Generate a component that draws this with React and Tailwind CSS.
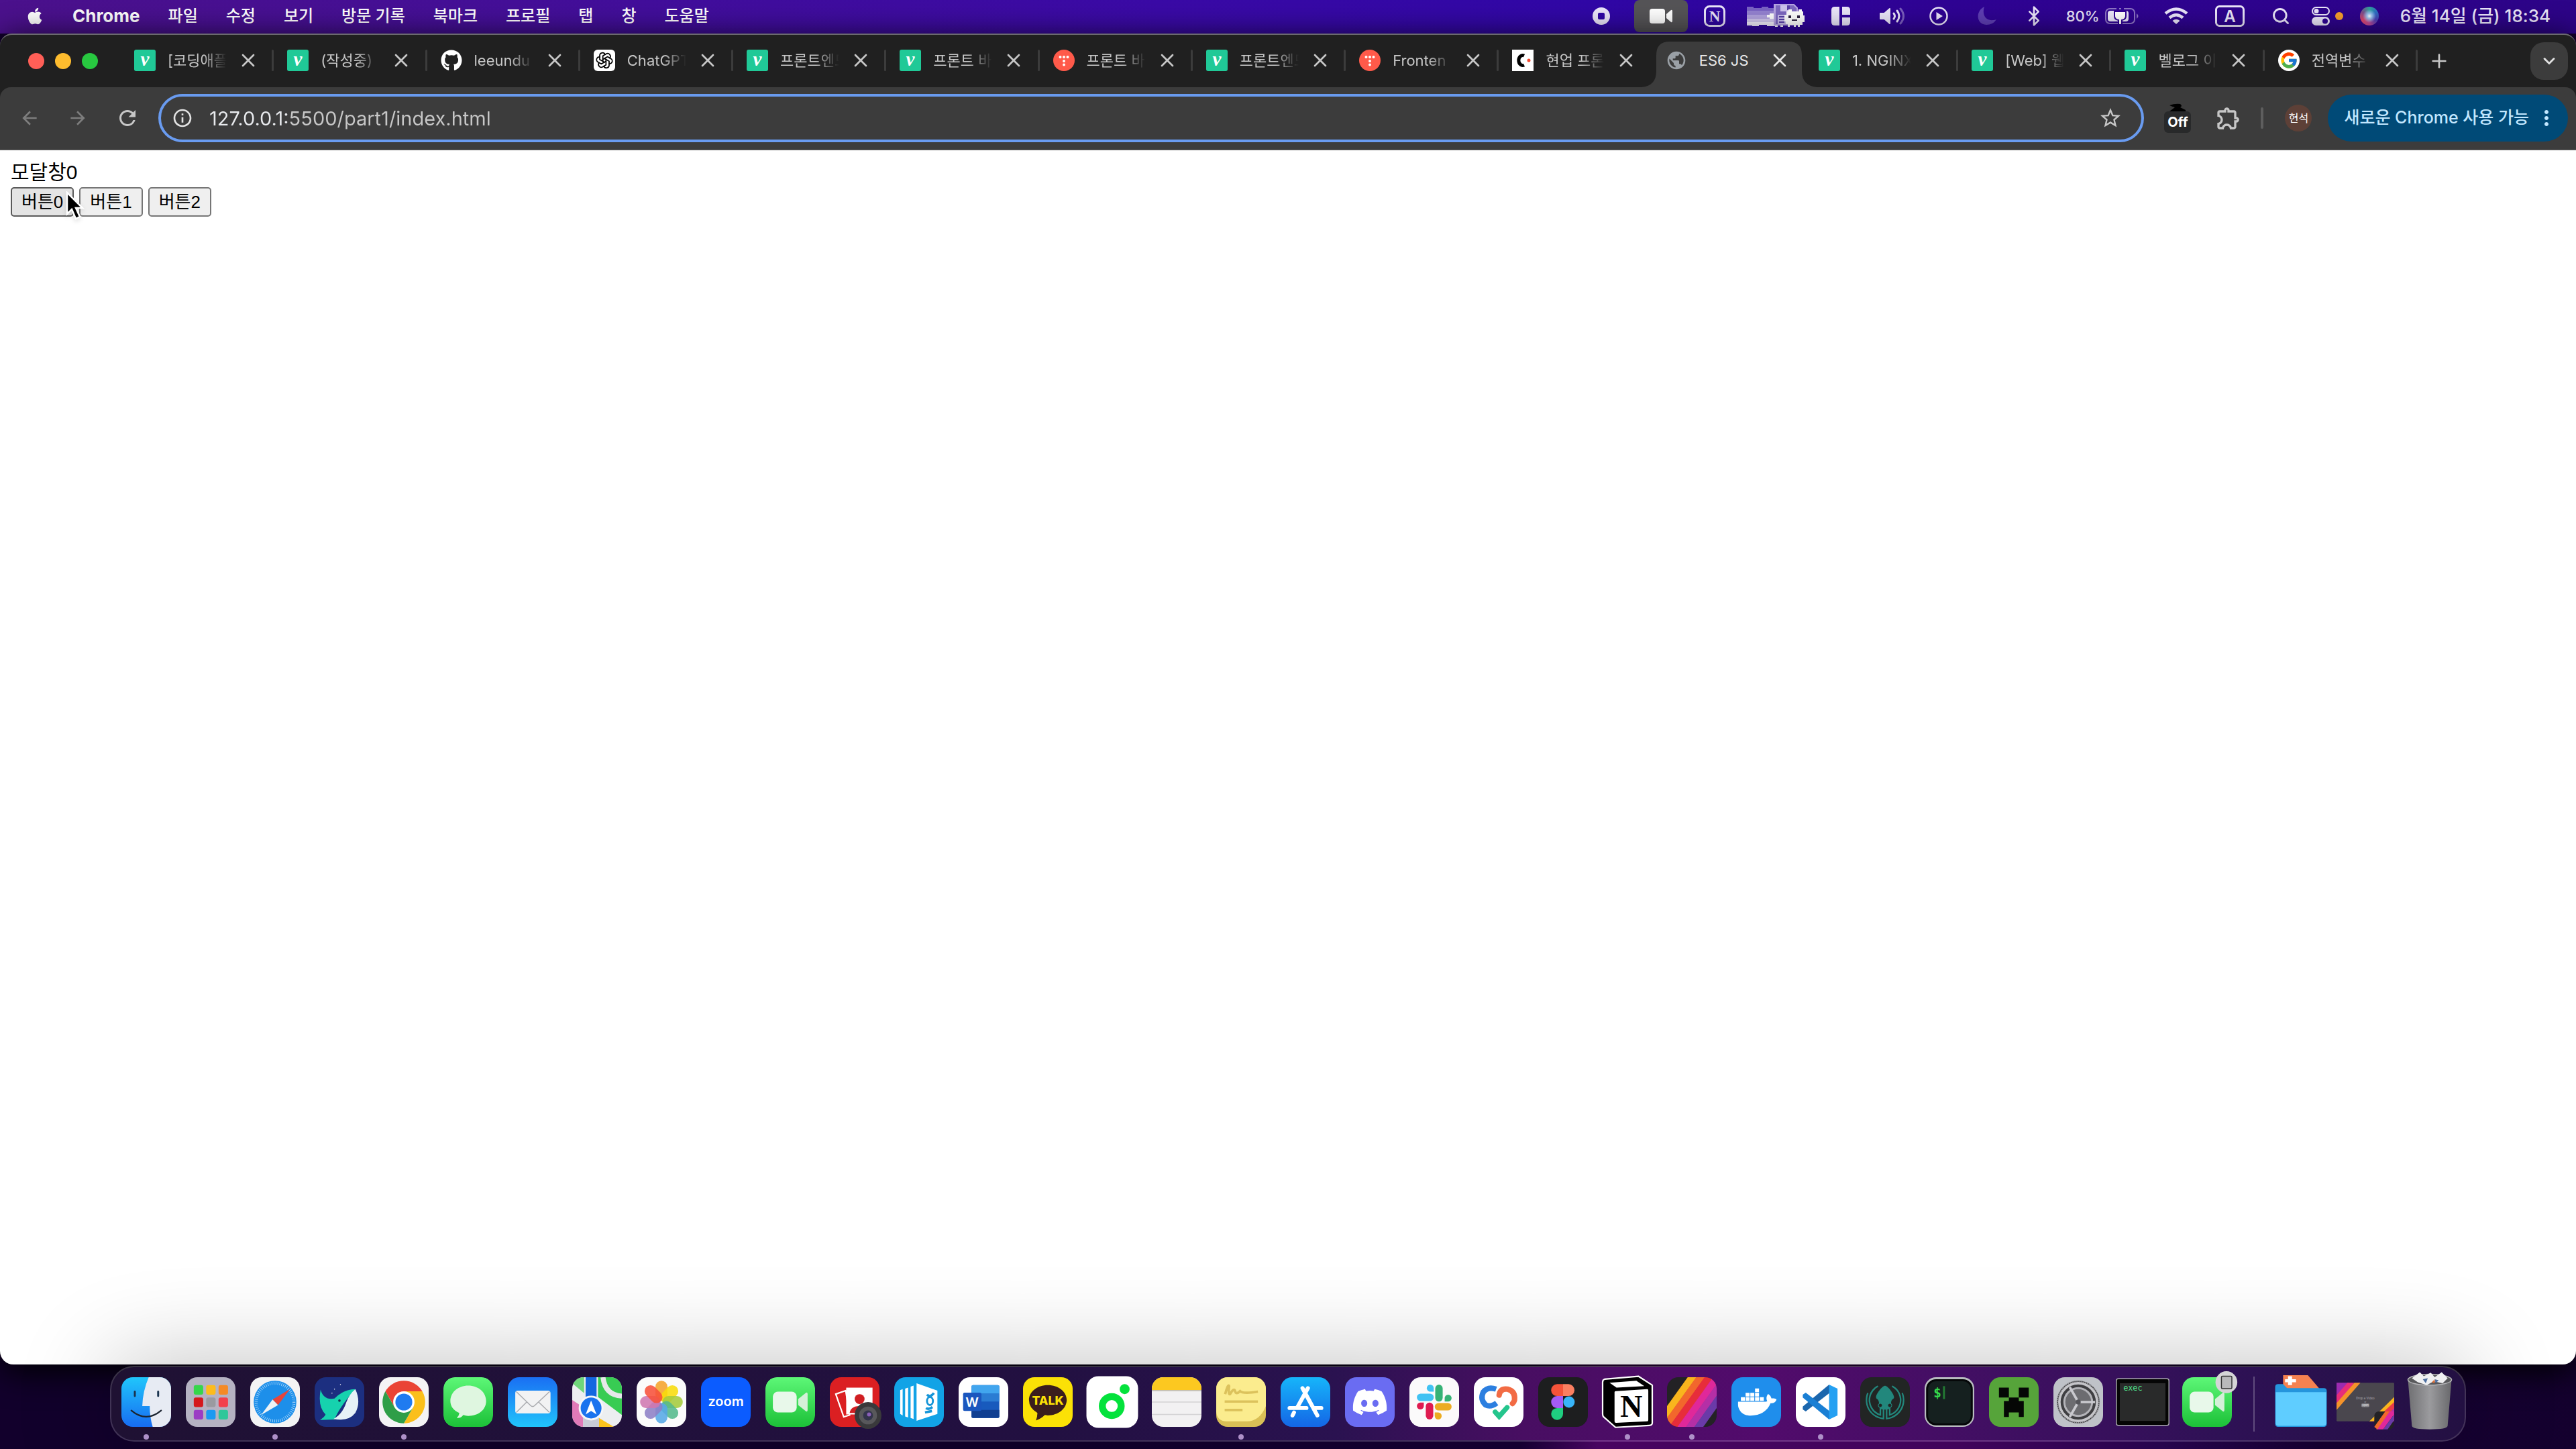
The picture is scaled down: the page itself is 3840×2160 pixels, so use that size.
import React, { useState } from 'react';
import { FaApple, FaGithub, FaDiscord, FaDocker } from 'react-icons/fa';
import { FcGoogle } from 'react-icons/fc';
import { TbBrandOpenai } from 'react-icons/tb';
import { SiGitkraken } from 'react-icons/si';
import { MdArrowBack, MdArrowForward, MdRefresh, MdInfoOutline, MdStarBorder, MdOutlineExtension, MdMoreVert, MdPublic } from 'react-icons/md';
import { Bluetooth, X, Plus, ChevronDown, Search } from 'lucide-react';

const menus = ['파일', '수정', '보기', '방문 기록', '북마크', '프로필', '탭', '창', '도움말'];

const tabs = [
  { title: '[코딩애플]', icon: 'velog' },
  { title: '(작성중)', icon: 'velog' },
  { title: 'leeundu', icon: 'github' },
  { title: 'ChatGPT', icon: 'gpt' },
  { title: '프론트엔드', icon: 'velog' },
  { title: '프론트 바', icon: 'velog' },
  { title: '프론트 바', icon: 'tistory' },
  { title: '프론트엔드', icon: 'velog' },
  { title: 'Fronten', icon: 'tistory' },
  { title: '현업 프론', icon: 'codeit' },
  { title: 'ES6 JS', icon: 'globe', active: true },
  { title: '1. NGINX', icon: 'velog' },
  { title: '[Web] 웹', icon: 'velog' },
  { title: '벨로그 이', icon: 'velog' },
  { title: '전역변수', icon: 'google' },
];

const Favicon = ({ name }) => {
  if (name === 'velog') {
    return (
      <svg viewBox="0 0 32 32" className="size-8 shrink-0">
        <rect width="32" height="32" rx="3" fill="#20c997" />
        <text x="16" y="24" textAnchor="middle" fontFamily="Liberation Serif" fontSize="29" fontWeight="700" fontStyle="italic" fill="#fff">v</text>
      </svg>
    );
  }
  if (name === 'github') return <FaGithub className="size-8 shrink-0 text-white" />;
  if (name === 'gpt') {
    return (
      <span className="flex size-8 shrink-0 items-center justify-center rounded-md bg-white text-black">
        <TbBrandOpenai className="size-7 stroke-[1.5]" />
      </span>
    );
  }
  if (name === 'tistory') {
    return (
      <svg viewBox="0 0 32 32" className="size-8 shrink-0" fill="#fff">
        <circle cx="16" cy="16" r="16" fill="#ff5a4a" />
        <circle cx="10.500" cy="11" r="2" />
        <circle cx="16" cy="11" r="2" />
        <circle cx="21.500" cy="11" r="2" />
        <circle cx="16" cy="17" r="2" />
        <circle cx="16" cy="22.500" r="2" />
      </svg>
    );
  }
  if (name === 'codeit') {
    return (
      <svg viewBox="0 0 32 32" className="size-8 shrink-0">
        <rect width="32" height="32" fill="#fff" />
        <path d="M18 9 A6 7.500 0 1 0 18 23" fill="none" stroke="#000" strokeWidth="5" />
        <circle cx="25" cy="16" r="2.500" fill="#f4482e" />
      </svg>
    );
  }
  if (name === 'google') {
    return (
      <span className="flex size-8 shrink-0 items-center justify-center rounded-full bg-white">
        <FcGoogle className="size-7" />
      </span>
    );
  }
  return <MdPublic className="size-8 shrink-0 text-[#9aa0a6]" />;
};

const Tab = ({ tab }) => (
  <div role="tab" aria-selected={!!tab.active} className="relative flex h-full min-w-0 flex-1 items-center">
    {tab.active && (
      <svg viewBox="0 0 262 68" preserveAspectRatio="none" className="absolute -left-4 bottom-0 h-[68px] w-[262px]" fill="#3c3c3c">
        <path d="M0 68 Q22 66 22 44 V20 Q22 0 42 0 H219 Q239 0 239 20 V44 Q239 66 262 68Z" />
      </svg>
    )}
    <div className="relative flex w-full items-center pb-0.5 pl-5">
      <Favicon name={tab.icon} />
      <span
        className={`ml-[18px] w-[88px] overflow-hidden whitespace-nowrap text-[22px] leading-8 ${
          tab.active ? 'text-[#e8e8e8]' : 'text-[#c7c7c7] [mask-image:linear-gradient(90deg,#000_60%,transparent)]'
        }`}
      >
        {tab.title}
      </span>
      <button aria-label="탭 닫기" className={`ml-[18px] flex w-7 justify-center ${tab.active ? 'text-[#e8e8e8]' : 'text-[#c7c7c7]'}`}>
        <X className="size-8 shrink-0" strokeWidth={2} />
      </button>
      {!tab.active && tab.icon !== 'codeit' && <span className="ml-auto h-8 w-[3px] rounded-full bg-[#3c3c3c]" />}
    </div>
  </div>
);

/* ---------- menu bar status icons ---------- */

const NyanDisk = () => (
  <svg viewBox="0 0 86 36" className="ml-8 h-9 w-[86px]" shapeRendering="crispEdges">
    <path d="M0 4h10v2h12v-2h10v2h10v6H0z" fill="#7a63c4" />
    <path d="M0 10h42v6H0z" fill="#9583d2" />
    <path d="M0 16h42v6H0z" fill="#b3a4e0" />
    <path d="M0 22h42v5H0z" fill="#d2c8ee" />
    <path d="M0 27h42v6H30v-2H18v2H8v-1H0z" fill="#f2eefc" />
    <path d="M30 16h4v-2h8v8h-8v-2h-4z" fill="#fff" />
    <path d="M40 0h30l6 6v26H40z" fill="#b6a4e2" />
    <path d="M43 2h27l4 5v23H43z" fill="#7d68c0" />
    <path d="M50 2h14v9H50z" fill="#cfc4ee" />
    <path d="M60 2h4v7h-4z" fill="#5a41a8" />
    <path d="M46 16h12v14H46z" fill="#c9bced" />
    <path d="M48 18h8v2h-8zM48 22h8v2h-8zM48 26h8v2h-8z" fill="#5a41a8" />
    <path d="M62 8h5v3h10v-3h5v3h2v6h2v10h-3v4h-4v3h-3v-3h-3v3h-3v-3h-6v3h-3v-4h-3v-4h-2V16h3v-5h3z" fill="#fff" />
    <path d="M62 17h4v4h-4zM75 17h4v4h-4zM67 23h8v2h-8z" fill="#2c2140" />
    <path d="M42 32h4v2h-4zM50 32h4v2h-4z" fill="#fff" />
  </svg>
);

const StatusIcons = () => (
  <div className="flex items-center font-medium text-[#ebe6fa]">
    <svg viewBox="0 0 26 26" className="size-[26px]" fill="currentColor">
      <path fillRule="evenodd" d="M13 0a13 13 0 1 0 0 26a13 13 0 1 0 0-26zM10 8h6q2 0 2 2v6q0 2-2 2h-6q-2 0-2-2v-6q0-2 2-2z" />
    </svg>
    <span className="ml-9 flex h-12 w-20 items-center justify-center rounded-lg bg-[#555457]">
      <svg viewBox="0 0 34 22" className="h-[22px] w-[34px]" fill="#fff">
        <rect width="23" height="22" rx="4" />
        <path d="M25 8 L32 2 Q34 1 34 4 V18 Q34 21 32 20 L25 14Z" />
      </svg>
    </span>
    <svg viewBox="0 0 32 32" className="ml-6 size-8">
      <rect x="1.500" y="1.500" width="29" height="29" rx="7" fill="none" stroke="currentColor" strokeWidth="3" />
      <text x="16" y="24" textAnchor="middle" fontFamily="Liberation Serif" fontWeight="700" fontSize="23" fill="currentColor">N</text>
    </svg>
    <NyanDisk />
    <svg viewBox="0 0 28 28" className="ml-10 size-7" fill="currentColor">
      <path d="M5 0H12V28H5Q0 28 0 23V5Q0 0 5 0ZM16 0H23Q28 0 28 5V12H16ZM16 16H28V23Q28 28 23 28H16Z" />
    </svg>
    <svg viewBox="0 0 38 26" className="ml-11 h-[26px] w-[38px]" fill="none" stroke="currentColor" strokeWidth="3" strokeLinecap="round">
      <path d="M1 9H7L15 2V24L7 17H1Z" fill="currentColor" strokeWidth="2" strokeLinejoin="round" />
      <path d="M21 9Q24 13 21 17" />
      <path d="M26 5Q32 13 26 21" />
      <path d="M31 2Q40 13 31 24" opacity=".4" />
    </svg>
    <svg viewBox="0 0 28 28" className="ml-9 size-7">
      <circle cx="14" cy="14" r="12.500" fill="none" stroke="currentColor" strokeWidth="2.500" />
      <path d="M10.500 8 L20 14 L10.500 20Z" fill="currentColor" />
    </svg>
    <svg viewBox="0 0 28 28" className="ml-11 size-7" fill="#5f3fb4">
      <path d="M10 0C-3 6 -3 26 13 27Q23 27 28 19C12 24 6 12 10 0Z" />
    </svg>
    <Bluetooth className="ml-10 size-8" strokeWidth={2} />
    <span className="ml-8 text-[22px] leading-8">80%</span>
    <svg viewBox="0 0 52 26" className="ml-2 h-[26px] w-[52px]">
      <rect x="1" y="2" width="43" height="22" rx="6" fill="none" stroke="currentColor" strokeWidth="2" opacity=".5" />
      <path d="M47 9Q52 13 47 17Z" fill="currentColor" opacity=".5" />
      <rect x="4" y="5" width="31" height="16" rx="4" fill="currentColor" />
      <path d="M18 0V6H14V13Q14 18 20 19V26H25V19Q31 18 31 13V6H27V0H25V6H20V0Z" fill="#fff" stroke="#2f0394" strokeWidth="2" />
    </svg>
    <svg viewBox="0 0 36 26" className="ml-9 h-[26px] w-9" fill="none" stroke="currentColor" strokeWidth="4.500">
      <path d="M2 9Q18 -4 34 9" />
      <path d="M8 15.500Q18 7 28 15.500" />
      <path d="M18 25 L12.500 20Q18 15.500 23.500 20Z" fill="currentColor" stroke="none" />
    </svg>
    <svg viewBox="0 0 44 32" className="ml-10 h-8 w-11">
      <rect x="1.500" y="1.500" width="41" height="29" rx="5" fill="none" stroke="currentColor" strokeWidth="3" />
      <text x="22" y="25" textAnchor="middle" fontFamily="Inter" fontWeight="600" fontSize="24" fill="currentColor">A</text>
    </svg>
    <Search className="ml-10 size-7" strokeWidth={2.5} />
    <svg viewBox="0 0 48 28" className="ml-8 h-7 w-12">
      <rect x="1" y="1" width="25" height="11" rx="5.500" fill="none" stroke="currentColor" strokeWidth="2" />
      <circle cx="7" cy="6.500" r="3.500" fill="currentColor" />
      <rect x="0" y="15" width="27" height="13" rx="6.500" fill="currentColor" />
      <circle cx="20" cy="21.500" r="4" fill="#2f0394" />
      <circle cx="41" cy="14" r="6" fill="#f9a02c" />
    </svg>
    <span className="ml-6 size-7 rounded-full bg-[radial-gradient(circle_at_50%_50%,#fff_0%,#9cc6f2_18%,transparent_50%),conic-gradient(#2fa39b,#2d6fc4,#4b3fb5,#c14a9a,#e0466c,#7d4f8c,#2fa39b)]" />
    <span className="ml-8 text-[26px] leading-8">6월 14일 (금) 18:34</span>
  </div>
);

/* ---------- dock artwork, 100 x 100 units each ---------- */

const Finder = () => (
  <>
    <defs>
      <linearGradient id="finderBlue" x1="0" y1="0" x2="0" y2="1">
        <stop offset="0" stopColor="#20c6fb" />
        <stop offset="1" stopColor="#176cf2" />
      </linearGradient>
    </defs>
    <rect width="100" height="100" fill="url(#finderBlue)" />
    <path d="M55 0Q43 28 42 58H57Q57 80 63 100H100V0Z" fill="#e7ebf3" />
    <path d="M27 29V38M74 29V38" stroke="#1b3450" strokeWidth="4" strokeLinecap="round" />
    <path d="M20 67Q50 92 80 67" fill="none" stroke="#1b2430" strokeWidth="3" strokeLinecap="round" />
  </>
);

const launchColors = ['#36d64b', '#fdbb1c', '#f58a26', '#d4181c', '#9a9aa0', '#f2404c', '#9b3cc4', '#1b9af2', '#2fc79a'];
const Launchpad = () => (
  <>
    <rect width="100" height="100" fill="#b5b2c2" />
    {launchColors.map((c, i) => (
      <rect key={c} x={16 + (i % 3) * 25} y={16 + Math.floor(i / 3) * 25} width="19" height="19" rx="4" fill={c} />
    ))}
  </>
);

const Safari = () => (
  <>
    <rect width="100" height="100" fill="#f3f3f4" />
    <circle cx="50" cy="50" r="43" fill="#1d8fea" />
    <circle cx="50" cy="50" r="38" fill="none" stroke="#c6e4fb" strokeWidth="6" strokeDasharray="1 3" />
    <path d="M80 24 L56 56 L45 45Z" fill="#e8443a" />
    <path d="M22 76 L56 56 L45 45Z" fill="#eef2f5" />
  </>
);

const Whale = () => (
  <>
    <rect width="100" height="100" fill="#1c2f80" />
    <path d="M12 25Q18 47 40 43Q57 25 82 24Q50 60 40 85L11 86Q20 80 22 75Q6 60 12 25Z" fill="#16d2ae" />
    <path d="M82 24Q94 50 82 72Q68 90 38 84Q56 75 64 50Q70 34 82 24Z" fill="#e6f1f6" />
    <circle cx="50" cy="47" r="2.500" fill="#12344f" />
    <circle cx="40" cy="24" r="1" fill="#fff" />
    <circle cx="52" cy="15" r="1" fill="#fff" />
    <circle cx="35" cy="32" r="1" fill="#fff" />
  </>
);

const ChromeIcon = () => (
  <>
    <rect width="100" height="100" fill="#f4f3f5" />
    <path d="M50 50L31.400 60.750L12.800 28.500A43 43 0 0 1 87.200 28.500H50Z" fill="#ea4335" />
    <path d="M50 28.500H87.200A43 43 0 0 1 50 93L68.600 60.750L50 50Z" fill="#fbbf1b" />
    <path d="M50 93A43 43 0 0 1 12.800 28.500L31.400 60.750L50 50L68.600 60.750Z" fill="#2f9e48" />
    <circle cx="50" cy="50" r="21.500" fill="#fff" />
    <circle cx="50" cy="50" r="17" fill="#1f7bf0" />
  </>
);

const Green = ({ id }) => (
  <>
    <defs>
      <linearGradient id={id} x1="0" y1="0" x2="0" y2="1">
        <stop offset="0" stopColor="#5df777" />
        <stop offset="1" stopColor="#1cc138" />
      </linearGradient>
    </defs>
    <rect width="100" height="100" rx="23" fill={`url(#${id})`} />
  </>
);

const Messages = () => (
  <>
    <Green id="msg" />
    <path d="M50 17C70 17 86 30 86 48S70 78 50 78Q45 78 40 76Q35 83 27 82Q32 77 32 72Q14 64 14 48C14 30 30 17 50 17Z" fill="#dff6e0" />
  </>
);

const Mail = () => (
  <>
    <defs>
      <linearGradient id="mail" x1="0" y1="0" x2="0" y2="1">
        <stop offset="0" stopColor="#1a6ff3" />
        <stop offset="1" stopColor="#21c4fb" />
      </linearGradient>
    </defs>
    <rect width="100" height="100" fill="url(#mail)" />
    <rect x="15" y="27" width="71" height="46" rx="5" fill="#f2f2f3" />
    <path d="M17 29L46 57Q50 61 54 57L84 29M17 71L38 50M84 71L62 50" fill="none" stroke="#a9aaae" strokeWidth="2" />
  </>
);

const Maps = () => (
  <>
    <rect width="100" height="100" fill="#eceef0" />
    <path d="M0 0H24V32L0 12Z" fill="#6fd67a" />
    <path d="M52 0H100V76L52 40Z" fill="#38cc53" />
    <path d="M62 0Q66 36 100 38" fill="none" stroke="#e6e8ea" strokeWidth="10" />
    <path d="M0 46L22 60V100H0Z" fill="#e07ab8" />
    <path d="M54 82L84 100H54Z" fill="#fbc21d" />
    <path d="M22 55H54V100H22Z" fill="#c9ccd6" />
    <path d="M27 0H49V50H27Z" fill="#1467e0" />
    <circle cx="38" cy="62" r="25" fill="#f5f6f8" />
    <circle cx="38" cy="62" r="21" fill="#1a73ee" />
    <path d="M38 47L49 75L38 68L27 75Z" fill="#fff" />
  </>
);

const petals = ['#f5a32a', '#f8dc0a', '#a5cb3c', '#54b98c', '#57a9e6', '#8d7fc6', '#cf77b0', '#f7513a'];
const Photos = () => (
  <>
    <rect width="100" height="100" fill="#fbfbfb" />
    {petals.map((c, i) => (
      <rect key={c} x="38" y="7" width="24" height="41" rx="12" fill={c} fillOpacity=".88" transform={`rotate(${i * 45} 50 50)`} />
    ))}
  </>
);

const Zoom = () => (
  <>
    <rect width="100" height="100" fill="#0b5cff" />
    <text x="50" y="58" textAnchor="middle" fontFamily="Inter" fontWeight="600" fontSize="27" fill="#fff">zoom</text>
  </>
);

const FaceTime = () => (
  <>
    <Green id="ft" />
    <rect x="15" y="29" width="48" height="42" rx="10" fill="#e8f8ea" />
    <path d="M66 44L82 31Q85 30 85 34V66Q85 70 82 69L66 56Z" fill="#d4f0d8" />
  </>
);

const PhotoBooth = () => (
  <>
    <rect width="100" height="100" rx="23" fill="#db1f22" />
    <path d="M12 34L32 27L40 76L28 80Z" fill="none" stroke="#fff" strokeWidth="3" />
    <rect x="33" y="21" width="53" height="54" fill="#fff" />
    <circle cx="60" cy="44" r="10" fill="#d01e22" />
    <path d="M40 72Q42 58 60 58T80 72Z" fill="#d01e22" />
    <circle cx="77" cy="77" r="27" fill="#39393b" />
    <circle cx="77" cy="77" r="18" fill="#58585b" />
    <circle cx="77" cy="77" r="10" fill="#33344c" />
    <circle cx="79" cy="75" r="4" fill="#8a5fb8" />
  </>
);

const Ridi = () => (
  <>
    <rect width="100" height="100" fill="#12a3e6" />
    <path d="M12 26L17 24V77L12 74ZM22 23L28 21V81L22 79ZM33 19L39 17V84L33 82Z" fill="#fff" />
    <path d="M45 12L87 27V74L45 88Z" fill="#fff" />
    <path d="M66 35Q72 42 80 32M64 62Q69 66 77 60" fill="none" stroke="#1595d8" strokeWidth="5" />
    <ellipse cx="72" cy="48" rx="6" ry="8" fill="none" stroke="#1595d8" strokeWidth="4" />
    <path d="M62 71L76 68" stroke="#1595d8" strokeWidth="5" />
  </>
);

const Word = () => (
  <>
    <rect width="100" height="100" fill="#fff" />
    <rect x="26" y="16" width="56" height="66" rx="3" fill="#185abd" />
    <path d="M26 33V19Q26 16 29 16H79Q82 16 82 19V33Z" fill="#41a5ee" />
    <path d="M26 33H82V49H26Z" fill="#2b7cd3" />
    <path d="M26 66H82V79Q82 82 79 82H29Q26 82 26 79Z" fill="#103f91" />
    <rect x="9" y="31" width="37" height="37" rx="3" fill="#1a56be" />
    <text x="27" y="59" textAnchor="middle" fontFamily="Inter" fontWeight="600" fontSize="26" fill="#fff">W</text>
  </>
);

const Kakao = () => (
  <>
    <rect width="100" height="100" fill="#fbe106" />
    <path d="M50 16C71 16 88 29 88 46S71 77 50 77L44 76Q36 84 26 87Q29 80 29 72Q12 62 12 46C12 29 29 16 50 16Z" fill="#3a1d1d" />
    <text x="50" y="56" textAnchor="middle" fontFamily="Inter" fontWeight="800" fontSize="24" fill="#fbe106">TALK</text>
  </>
);

const Oh = () => (
  <>
    <rect x="-2" y="-2" width="104" height="104" rx="24" fill="#fff" />
    <circle cx="49" cy="58" r="19" fill="none" stroke="#04e23c" strokeWidth="14" />
    <circle cx="75" cy="24" r="10" fill="#04e23c" />
  </>
);

const Notes = () => (
  <>
    <rect width="100" height="100" fill="#f2f1f2" />
    <rect width="100" height="26" fill="#fcc820" />
    <path d="M0 27H100" stroke="#b9b6ae" strokeWidth="2" />
    <path d="M0 50H100M0 75H100" stroke="#d3d2d4" strokeWidth="2" />
  </>
);

const Stickies = () => (
  <>
    <rect width="100" height="100" fill="#d9bf56" />
    <path d="M0 0H100V58Q88 88 62 89H20Q2 88 0 70Z" fill="#fbec8e" />
    <path d="M18 34Q24 12 26 18Q24 36 28 34Q36 20 38 28Q40 36 48 28Q54 34 84 29" fill="none" stroke="#dcc25c" strokeWidth="5" />
    <path d="M17 49H84M17 66H53" stroke="#dcc25c" strokeWidth="5" />
  </>
);

const AppStore = () => (
  <>
    <defs>
      <linearGradient id="store" x1="0" y1="0" x2="0" y2="1">
        <stop offset="0" stopColor="#16b5fa" />
        <stop offset="1" stopColor="#1466e6" />
      </linearGradient>
    </defs>
    <rect width="100" height="100" fill="url(#store)" />
    <path d="M55 22L34 60M27 71L24 77M44 22L74 77M18 62H52M68 62H82" stroke="#fff" strokeWidth="8" strokeLinecap="round" />
  </>
);

const Discord = () => (
  <>
    <rect width="100" height="100" fill="#6a6cf2" />
    <FaDiscord x="13" y="13" size={74} color="#fff" />
  </>
);

const slackArm = (
  <>
    <rect x="52" y="15" width="15" height="34" rx="7.500" />
    <path d="M71 49V42A7 7 0 1 1 78 49Z" />
  </>
);
const Slack = () => (
  <>
    <rect width="100" height="100" fill="#fbfafb" />
    <g fill="#36b276">{slackArm}</g>
    <g fill="#ecac22" transform="rotate(90 50 50)">{slackArm}</g>
    <g fill="#df1b51" transform="rotate(180 50 50)">{slackArm}</g>
    <g fill="#41c2f3" transform="rotate(270 50 50)">{slackArm}</g>
  </>
);

const Clova = () => (
  <>
    <rect width="100" height="100" fill="#fff" />
    <path d="M45 24Q28 18 19 30Q12 45 24 56Q34 61 46 52" fill="none" stroke="#2c7fe0" strokeWidth="11" />
    <path d="M51 36Q53 22 68 24Q84 28 82 46Q81 50 78 53" fill="none" stroke="#f26b44" strokeWidth="11" strokeLinecap="round" />
    <path d="M43 70L51 79L67 61" fill="none" stroke="#24c58c" strokeWidth="10" strokeLinecap="round" />
  </>
);

const Figma = () => (
  <>
    <rect width="100" height="100" fill="#1d1e1f" />
    <path d="M50 14H38A12 12 0 0 0 38 38H50Z" fill="#f5533a" />
    <path d="M50 14H61A12 12 0 0 1 61 38H50Z" fill="#fb7f61" />
    <path d="M50 38H38A12 12 0 0 0 38 62H50Z" fill="#a45bf5" />
    <circle cx="62" cy="50" r="11.500" fill="#38b5f8" />
    <path d="M50 62H38A12 12 0 1 0 50 74Z" fill="#1fce80" />
  </>
);

const Notion = () => (
  <>
    <path d="M4 4L72 -2L100 16V92Q100 97 94 97L26 101L2 80Q0 78 0 74V10Q0 5 4 4Z" fill="#000" stroke="#fff" strokeWidth="3" strokeLinejoin="round" />
    <path d="M14 11L68 7L84 18L28 21Z" fill="#fff" />
    <path d="M24 30Q24 28 27 28L90 24Q92 24 92 27V86Q92 89 89 89L27 92Q24 92 24 89Z" fill="#fff" />
    <text x="58" y="80" textAnchor="middle" fontFamily="Liberation Serif" fontWeight="700" fontSize="62" fill="#000">N</text>
  </>
);

const stripes = ['#f9b51d', '#f2672c', '#e72d3a', '#e0289a', '#b52fa6', '#6a3aa8'];
const Compressor = () => (
  <>
    <rect width="100" height="100" fill="#232225" />
    {stripes.map((c, i) => (
      <path key={c} d={`M${-30 + i * 17} 100L${56 + i * 17} -20h18L${-12 + i * 17} 100z`} fill={c} />
    ))}
  </>
);

const Docker = () => (
  <>
    <rect width="100" height="100" fill="#1f8eec" />
    <FaDocker x="13" y="11" size={78} color="#fff" />
  </>
);

const Code = () => (
  <>
    <rect width="100" height="100" fill="#fff" />
    <path d="M67 15L14 59V65L20 69L70 30Z" fill="#1b66ad" />
    <path d="M67 85L14 41V35L20 31L70 70Z" fill="#1a7fd4" />
    <path d="M67 15L84 23V77L67 85V15Z" fill="#24a0f2" />
  </>
);

const Kraken = () => (
  <>
    <rect width="100" height="100" fill="#222524" />
    <SiGitkraken x="11" y="12" size={78} color="#22877c" />
  </>
);

const Term = () => (
  <>
    <rect width="100" height="100" fill="#b9bcc0" />
    <rect x="3" y="4" width="94" height="93" rx="20" fill="#050708" />
    <rect x="7" y="8" width="86" height="85" rx="16" fill="#15201f" />
    <text x="18" y="41" fontFamily="DejaVu Sans Mono" fontSize="26" fontWeight="700" fill="#35dc4c">$</text>
    <rect x="37" y="18" width="4" height="26" fill="#237a33" />
  </>
);

const Creeper = () => (
  <>
    <rect width="100" height="100" fill="#56a43a" />
    <path d="M20 21H40V41H20ZM60 21H80V41H60ZM40 41H60V48H70V80H60V71H40V80H30V48H40Z" fill="#050705" />
  </>
);

const Settings = () => (
  <>
    <rect width="100" height="100" fill="#bfc2c8" />
    <circle cx="50" cy="50" r="43" fill="#3f3f42" />
    <circle cx="50" cy="50" r="38" fill="none" stroke="#c5c5c9" strokeWidth="5" />
    <circle cx="50" cy="50" r="42" fill="none" stroke="#98989c" strokeWidth="3" strokeDasharray="2 2" />
    <circle cx="50" cy="50" r="28" fill="#6c6c70" stroke="#b3b3b8" strokeWidth="4" />
    <path d="M50 50L84 50M50 50L33 20M50 50L33 80" stroke="#c9c9ce" strokeWidth="5" />
    <circle cx="50" cy="50" r="5" fill="#55555a" />
  </>
);

const Exec = () => (
  <>
    <rect x="-3" y="3" width="106" height="94" rx="4" fill="#050505" stroke="#a9a9ad" strokeWidth="2" />
    <rect x="4" y="12" width="92" height="76" fill="#292a2a" />
    <text x="11" y="27" fontFamily="DejaVu Sans Mono" fontSize="16" fill="#4fe08a">exec</text>
  </>
);

const FaceTimeHandoff = () => (
  <>
    <FaceTime />
    <circle cx="89" cy="10" r="22" fill="#d5d5d6" />
    <rect x="79" y="-2" width="21" height="25" rx="2" fill="#b9b9bb" stroke="#333" strokeWidth="2" />
  </>
);

const Downloads = () => (
  <>
    <path d="M14 -4H64L88 24H14Z" fill="#f58250" />
    <path d="M24 -2h8v6h8v6h-8v6h-8v-6h-6v-6h6z" fill="#fff" />
    <path d="M-2 20Q-2 14 4 14H14L22 22H96Q102 22 102 28V94Q102 100 96 100H4Q-2 100 -2 94Z" fill="#2595dc" />
    <path d="M-1 30H101V92Q101 98 95 98H5Q-1 98 -1 92Z" fill="#5fcdff" />
  </>
);

const MiniWindow = () => (
  <>
    <rect x="-8" y="11" width="116" height="78" rx="2" fill="#4a474e" />
    <path d="M-8 11H18L-8 40Z" fill="#9c2bb0" />
    <path d="M14 11H28L-8 54V36Z" fill="#e72d7a" />
    <path d="M28 11H40L-8 66V52Z" fill="#f5932a" />
    <path d="M108 40V52L68 89H58Z" fill="#f9b51d" />
    <path d="M108 50V66L84 89H66Z" fill="#e83a4a" />
    <path d="M108 62V89H82Z" fill="#b52fa6" />
    <text x="50" y="45" textAnchor="middle" fontFamily="Inter" fontSize="6" fill="#b5b3b8">Drop a Video</text>
    <text x="50" y="51" textAnchor="middle" fontFamily="Inter" fontSize="4" fill="#b5b3b8">or</text>
    <rect x="42" y="53" width="16" height="7" rx="2" fill="#8a888e" />
    <text x="50" y="58" textAnchor="middle" fontFamily="Inter" fontSize="5" fill="#e8e8ea">Open</text>
    <rect x="68" y="69" width="39" height="36" rx="9" fill="#232225" />
    <path d="M72 105L98 69H107V76L86 105Z" fill="#e0289a" />
    <path d="M68 100L90 69H99L74 105Z" fill="#f2672c" />
    <path d="M86 105L107 76V88L95 105Z" fill="#6a3aa8" />
  </>
);

const Trash = () => (
  <>
    <defs>
      <linearGradient id="bin" x1="0" y1="0" x2="1" y2="0">
        <stop offset="0" stopColor="#6f6f72" />
        <stop offset=".5" stopColor="#9b9b9e" />
        <stop offset="1" stopColor="#68686b" />
      </linearGradient>
    </defs>
    <path d="M6 4L14 98Q15 105 50 105T86 98L94 4Z" fill="url(#bin)" />
    <ellipse cx="50" cy="5" rx="44" ry="11" fill="#59595c" stroke="#b5b5b8" strokeWidth="2" />
    <path d="M14 2L30 -10L38 -2L52 -9L60 0L74 -10L86 2L76 12L58 8L44 16L26 10Z" fill="#f0f0f2" />
    <path d="M36 4L46 2L42 12ZM60 4L68 6L62 12Z" fill="#4d6fa0" />
    <path d="M54 10L60 4L60 12Z" fill="#d9703a" />
  </>
);

const dockApps = [
  { name: 'Finder', Art: Finder, running: true },
  { name: 'Launchpad', Art: Launchpad },
  { name: 'Safari', Art: Safari, running: true },
  { name: 'Whale', Art: Whale },
  { name: 'Chrome', Art: ChromeIcon, running: true },
  { name: 'Messages', Art: Messages },
  { name: 'Mail', Art: Mail },
  { name: 'Maps', Art: Maps },
  { name: 'Photos', Art: Photos },
  { name: 'Zoom', Art: Zoom },
  { name: 'FaceTime', Art: FaceTime },
  { name: 'Photo Booth', Art: PhotoBooth, free: true },
  { name: 'Reader', Art: Ridi },
  { name: 'Word', Art: Word },
  { name: 'KakaoTalk', Art: Kakao },
  { name: 'Whale On', Art: Oh, free: true },
  { name: 'Notes', Art: Notes },
  { name: 'Stickies', Art: Stickies, running: true },
  { name: 'App Store', Art: AppStore },
  { name: 'Discord', Art: Discord },
  { name: 'Slack', Art: Slack },
  { name: 'Cleaner', Art: Clova },
  { name: 'Figma', Art: Figma },
  { name: 'Notion', Art: Notion, running: true, free: true },
  { name: 'Compressor', Art: Compressor, running: true },
  { name: 'Docker', Art: Docker },
  { name: 'VS Code', Art: Code, running: true },
  { name: 'GitKraken', Art: Kraken },
  { name: 'iTerm', Art: Term },
  { name: 'Minecraft', Art: Creeper },
  { name: 'Settings', Art: Settings },
  { name: 'exec', Art: Exec, free: true },
  { name: 'FaceTime Handoff', Art: FaceTimeHandoff, free: true },
];

const dockExtras = [
  { name: 'Downloads', Art: Downloads, free: true },
  { name: 'Minimized window', Art: MiniWindow, free: true },
  { name: 'Trash', Art: Trash, free: true },
];

const DockItem = ({ app }) => {
  const { Art } = app;
  return (
    <button aria-label={app.name} className="flex w-24 flex-col items-center">
      <svg viewBox="0 0 100 100" className={`size-[74px] ${app.free ? 'overflow-visible' : 'rounded-[17px]'}`}>
        <Art />
      </svg>
      {app.running && <span className="mt-[11px] size-2 rounded-full bg-[#ae90c8]" />}
    </button>
  );
};

const PageContent = () => {
  const [modal, setModal] = useState(0);
  return (
    <main className="flex-1 rounded-b-[20px] bg-white px-4 pt-2.5 font-['Liberation_Sans','Noto_Sans_CJK_KR',sans-serif] text-black">
      <p className="text-[30px] leading-[45px]">모달창{modal}</p>
      <div className="relative flex gap-2">
        {[0, 1, 2].map((n) => (
          <button
            key={n}
            onClick={() => setModal(n)}
            className={`h-11 rounded-[5px] border-2 px-3.5 text-[26px] leading-9 ${
              n === 0 ? 'border-[#5a5a5a] bg-[#e4e4e4]' : 'border-[#767676] bg-[#efefef]'
            }`}
          >
            버튼{n}
          </button>
        ))}
        <svg viewBox="0 0 28 44" className="absolute left-[82px] top-1.5 h-11 w-7 drop-shadow-md">
          <path d="M2 2V34L9 27L15 41L21 38L15 25H25Z" fill="#000" stroke="#fff" strokeWidth="2.500" />
        </svg>
      </div>
    </main>
  );
};

export default function App() {
  return (
    <div className="flex min-h-screen flex-col overflow-hidden bg-[linear-gradient(90deg,#12002c_0%,#12002e_40%,#170038_59%,#52066e_62%,#4a0668_76%,#2c0658_84%,#180036_90%,#14002e_100%)] font-['Inter','Noto_Sans_CJK_KR',sans-serif]">
      <header className="flex h-[50px] items-center justify-between bg-[linear-gradient(90deg,#4b118c_0%,#440f98_20%,#3a0aa6_45%,#3007a6_62%,#2f0394_75%,#2d0488_100%)] px-[38px] pb-0.5 text-white">
        <nav className="flex items-center gap-[42px] text-2xl font-medium">
          <FaApple className="size-7" />
          <span className="text-[26px] font-bold">Chrome</span>
          {menus.map((m) => (
            <button key={m}>{m}</button>
          ))}
        </nav>
        <StatusIcons />
      </header>

      <section className="flex flex-1 flex-col rounded-b-[20px] rounded-t-[18px] border-t-2 border-[#6b6a6e] bg-[#202020] shadow-[0_10px_50px_#000]">
        <div className="flex h-[78px] items-stretch pl-[42px] pr-3">
          <div className="mr-[34px] flex items-center gap-4">
            <span className="size-6 rounded-full bg-[#ff5f57]" />
            <span className="size-6 rounded-full bg-[#febc2e]" />
            <span className="size-6 rounded-full bg-[#28c840]" />
          </div>
          <div role="tablist" className="flex min-w-0 flex-1">
            {tabs.map((tab, i) => (
              <Tab key={i} tab={tab} />
            ))}
          </div>
          <button aria-label="새 탭" className="ml-4 text-[#c7c7c7]">
            <Plus className="size-8" strokeWidth={2} />
          </button>
          <button aria-label="탭 검색" className="ml-[120px] flex size-14 items-center justify-center self-center rounded-[20px] bg-[#3c3c3c] text-[#e0e0e0]">
            <ChevronDown className="size-7" strokeWidth={2.5} />
          </button>
        </div>

        <div className="flex h-[94px] items-center rounded-t-2xl border-b-2 border-[#4a4a4a] bg-[#3c3c3c] pl-7 pr-3 text-[#c7c7c7]">
          <button aria-label="뒤로" className="text-[#7d7d7d]">
            <MdArrowBack className="size-8" />
          </button>
          <button aria-label="앞으로" className="ml-10 text-[#7d7d7d]">
            <MdArrowForward className="size-8" />
          </button>
          <button aria-label="새로고침" className="ml-10">
            <MdRefresh className="size-9" />
          </button>
          <div className="ml-7 flex h-[72px] flex-1 items-center rounded-full border-4 border-[#699bf0] pl-4 pr-7">
            <MdInfoOutline className="size-8 text-[#e3e3e3]" />
            <input
              aria-label="주소창"
              defaultValue="127.0.0.1:5500/part1/index.html"
              className="ml-6 h-12 flex-1 bg-[linear-gradient(90deg,#e8eaed_118px,#c7c7c7_118px)] bg-clip-text text-[29px] text-transparent outline-none"
            />
            <button aria-label="북마크 추가">
              <MdStarBorder className="size-9" />
            </button>
          </div>
          <div className="ml-[30px] flex w-10 flex-col items-center">
            <svg viewBox="0 0 28 12" className="h-3 w-7">
              <path d="M2 3Q10 0 18 1Q22 4 18 6L26 10V12H2L10 6Q6 5 2 3Z" fill="#000" />
            </svg>
            <span className="w-10 rounded-md bg-[#28292a] text-center text-xl font-bold leading-8 text-white">Off</span>
          </div>
          <button aria-label="확장 프로그램" className="ml-9">
            <MdOutlineExtension className="size-10" />
          </button>
          <span className="ml-7 h-8 w-1 rounded-full bg-[#5e5e5e]" />
          <span className="ml-8 flex size-10 items-center justify-center rounded-full bg-[#5d4037] text-base text-white">현석</span>
          <button className="ml-6 flex h-[70px] items-center gap-2 rounded-full bg-[#004a77] pl-6 pr-3.5 text-[25px] font-medium text-[#c2e7ff]">
            새로운 Chrome 사용 가능
            <MdMoreVert className="size-9" />
          </button>
        </div>

        <PageContent />
      </section>

      <footer className="relative mx-auto mb-[11px] mt-0.5 flex rounded-[36px] border-2 border-white/20 bg-[linear-gradient(90deg,#1f1133_0%,#221041_40%,#2a1250_52%,#480e62_60%,#520b6c_70%,#400f62_80%,#2e1155_90%,#231042_100%)] bg-clip-padding px-1 shadow-[0_0_140px_rgba(0,0,0,0.28)]">
        <div className="flex h-[109px] pt-[15px]">
          {dockApps.map((app) => (
            <DockItem key={app.name} app={app} />
          ))}
        </div>
        <span className="mx-[21px] mt-3.5 h-[82px] w-0.5 bg-white/25" />
        <div className="flex h-[109px] pt-[15px]">
          {dockExtras.map((app) => (
            <DockItem key={app.name} app={app} />
          ))}
        </div>
      </footer>
    </div>
  );
}
